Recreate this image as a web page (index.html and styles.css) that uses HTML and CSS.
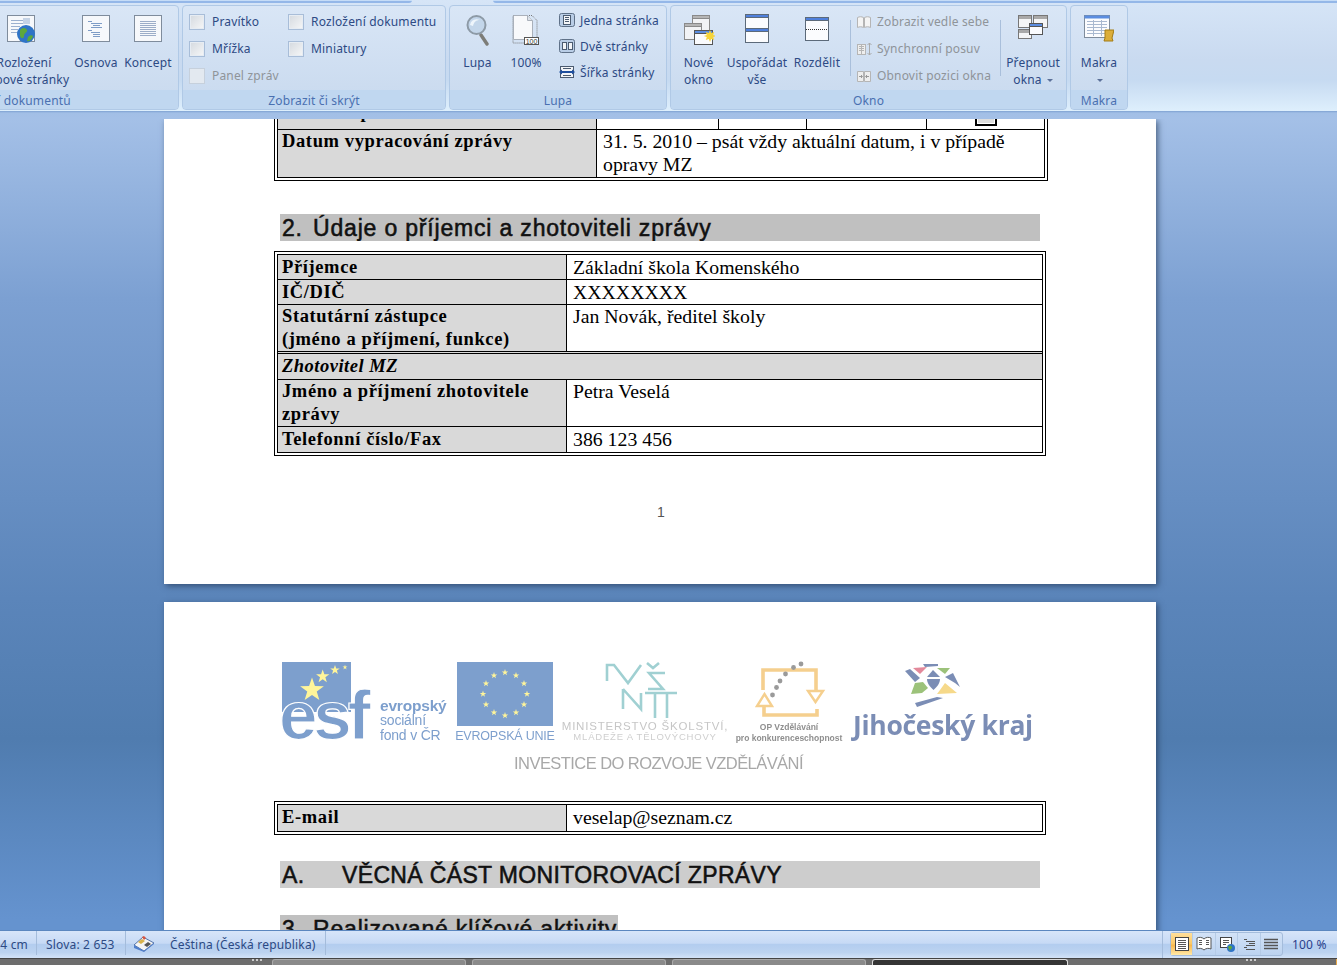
FILE: index.html
```html
<!DOCTYPE html>
<html lang="cs">
<head>
<meta charset="utf-8">
<title>Microsoft Word</title>
<link rel="stylesheet" href="styles.css">
</head>
<body>
<div class="app">
  <header class="ribbon">
    <div class="tabline"><span class="tl-a"></span><span class="tl-gap"></span><span class="tl-b"></span></div>
    <div class="groups">
      <section class="group g1">
        <div class="gbody">
          <div class="big w-web">
            <svg class="ic" width="32" height="32" viewBox="0 0 32 32"><rect x="2.500" y="1.500" width="27" height="26" fill="#f6f8fb" stroke="#7f8c9c"/><path d="M6 6.500h12M6 9.500h12M6 12.500h9M6 15.500h7M6 18.500h7" stroke="#9bb0cf"/><rect x="18" y="4" width="7" height="6" fill="#c5d3e6"/><circle cx="21" cy="20" r="9" fill="#2f74c6"/><path d="M15 16c3-3 6-2 7 0s-3 3-3 6-3 3-4 0zM23 23c2-2 4-2 5-1-1 4-4 6-6 5z" fill="#5da83c"/></svg>
            <span class="lab">Rozložení<br>webové stránky</span>
          </div>
          <div class="big w-osn">
            <svg class="ic" width="30" height="32" viewBox="0 0 30 32"><rect x="1.500" y="1.500" width="27" height="26" fill="#f6f8fb" stroke="#7f8c9c"/><path d="M7 7.500h4M10 9.500h11M12 11.500h7M10 13.500h11M7 16.500h4M10 18.500h9M12 20.500h7M12 22.500h7" stroke="#7e9cc6"/></svg>
            <span class="lab">Osnova</span>
          </div>
          <div class="big w-kon">
            <svg class="ic" width="30" height="32" viewBox="0 0 30 32"><rect x="1.500" y="1.500" width="27" height="26" fill="#f6f8fb" stroke="#7f8c9c"/><path d="M7 7.500h16M7 9.500h16M7 11.500h16M7 13.500h16M7 15.500h16M7 17.500h16M7 19.500h16M7 21.500h16" stroke="#9cadc8"/></svg>
            <span class="lab">Koncept</span>
          </div>
        </div>
        <div class="gcap gcap-r">Zobrazení dokumentů</div>
      </section>

      <section class="group g2">
        <div class="gbody checks">
          <div class="chk-col col-a">
            <div class="chk"><i class="box"></i>Pravítko</div>
            <div class="chk"><i class="box"></i>Mřížka</div>
            <div class="chk off"><i class="box"></i>Panel zpráv</div>
          </div>
          <div class="chk-col">
            <div class="chk"><i class="box"></i>Rozložení dokumentu</div>
            <div class="chk"><i class="box"></i>Miniatury</div>
          </div>
        </div>
        <div class="gcap">Zobrazit či skrýt</div>
      </section>

      <section class="group g3">
        <div class="gbody">
          <div class="big w-lupa">
            <svg class="ic" width="24" height="32" viewBox="0 0 24 32"><path d="M15 21l6 9" stroke="#7d7d78" stroke-width="3.400" stroke-linecap="round"/><circle cx="10.500" cy="11" r="9" fill="#c3d6ea" stroke="#8d9aa6" stroke-width="2"/><path d="M4 11c1-5 5-7 10-5-4 0-6 2-7 6z" fill="#eef5fb"/></svg>
            <span class="lab">Lupa</span>
          </div>
          <div class="big w-100">
            <svg class="ic" width="28" height="32" viewBox="0 0 28 32"><path d="M1 1.500h19l5 5V29H1z" fill="none" stroke="#777" stroke-dasharray="1 1"/><path d="M1.500 1.500h14l5 5v19h-19z" fill="#f8f9fb" stroke="#a9b0ba"/><path d="M15.500 1.500v5h5" fill="#dde3ea" stroke="#a9b0ba"/><rect x="12.500" y="23.500" width="14" height="7" fill="#fff" stroke="#555"/><text x="19.500" y="29.500" class="mini">100</text></svg>
            <span class="lab">100%</span>
          </div>
          <div class="smalls s-lupa">
            <div class="sm"><svg width="16" height="16" viewBox="0 0 16 16"><rect x=".5" y="1.500" width="15" height="13" rx="2" fill="#b9cde6" stroke="#5f7188"/><rect x="4.500" y="3.500" width="7" height="9" fill="#f3f5f8" stroke="#4b5b70"/><path d="M6 5.500h4M6 7.500h4M6 9.500h4" stroke="#4b5b70"/></svg>Jedna stránka</div>
            <div class="sm"><svg width="16" height="16" viewBox="0 0 16 16"><rect x=".5" y="1.500" width="15" height="13" rx="2" fill="#b9cde6" stroke="#5f7188"/><rect x="3.500" y="4.500" width="4" height="7" fill="#f3f5f8" stroke="#4b5b70"/><rect x="9.500" y="4.500" width="4" height="7" fill="#f3f5f8" stroke="#4b5b70"/></svg>Dvě stránky</div>
            <div class="sm"><svg width="16" height="16" viewBox="0 0 16 16"><rect x="1.500" y="2.500" width="13" height="11" fill="#f3f5f8" stroke="#4b5b70"/><path d="M4 4.500h8M4 11.500h8" stroke="#4b5b70"/><path d="M0 8l3-2.500v5zM16 8l-3-2.500v5z" fill="#1f4f9e"/><path d="M3 8h10" stroke="#1f4f9e" stroke-width="2"/></svg>Šířka stránky</div>
          </div>
        </div>
        <div class="gcap">Lupa</div>
      </section>

      <section class="group g4">
        <div class="gbody">
          <div class="big w-nove">
            <svg class="ic" width="32" height="32" viewBox="0 0 32 32"><rect x="9.500" y="1.500" width="17" height="16" fill="#f2f3f5" stroke="#8a8a8a"/><rect x="9.500" y="1.500" width="17" height="3" fill="#b5b5b5" stroke="#8a8a8a"/><rect x="1.500" y="9.500" width="17" height="16" fill="#f2f3f5" stroke="#8a8a8a"/><rect x="1.500" y="9.500" width="17" height="3" fill="#b5b5b5" stroke="#8a8a8a"/><rect x="11.500" y="16.500" width="18" height="14" fill="#fafbfd" stroke="#555"/><rect x="11.500" y="16.500" width="18" height="3" fill="#5b8de0" stroke="#555"/><path d="M27 16l1.200 3 3-1-1 3 3 1-3 1 1 3-3-1-1.200 3-1.200-3-3 1 1-3-3-1 3-1-1-3 3 1z" fill="#f6d43a"/></svg>
            <span class="lab">Nové<br>okno</span>
          </div>
          <div class="big w-usp">
            <svg class="ic" width="24" height="32" viewBox="0 0 24 32"><rect x=".5" y=".5" width="23" height="28" fill="#fbfcfe" stroke="#5c6a7a"/><rect x=".5" y=".5" width="23" height="3" fill="#4f80dc" stroke="#5c6a7a"/><rect x=".5" y="14.500" width="23" height="3" fill="#4f80dc" stroke="#5c6a7a"/></svg>
            <span class="lab">Uspořádat<br>vše</span>
          </div>
          <div class="big w-roz">
            <svg class="ic" width="24" height="32" viewBox="0 0 24 32"><rect x=".5" y="3.500" width="23" height="23" fill="#fbfcfe" stroke="#5c6a7a"/><rect x=".5" y="3.500" width="23" height="3" fill="#4f80dc" stroke="#5c6a7a"/><path d="M1 15.500h22" stroke="#333" stroke-dasharray="1 1"/></svg>
            <span class="lab">Rozdělit</span>
          </div>
          <i class="vsep sep1"></i>
          <div class="smalls s-okno">
            <div class="sm off"><svg width="16" height="16" viewBox="0 0 16 16"><path d="M1.500 3.500c2-1 4-1 6 0v10c-2-1-4-1-6 0zM8.500 3.500c2-1 4-1 6 0v10c-2-1-4-1-6 0z" fill="#f4f4f4" stroke="#b5b5b5"/></svg>Zobrazit vedle sebe</div>
            <div class="sm off"><svg width="16" height="16" viewBox="0 0 16 16"><rect x="1.500" y="3.500" width="8" height="10" fill="#eee" stroke="#b5b5b5"/><path d="M3 5.500h5M3 7.500h5M3 9.500h5M5.500 4v9" stroke="#b5b5b5"/><path d="M13.500 2v12M11.500 4l2-2 2 2M11.500 12l2 2 2-2" stroke="#aaa" fill="none"/></svg>Synchronní posuv</div>
            <div class="sm off"><svg width="16" height="16" viewBox="0 0 16 16"><path d="M1.500 3.500h6v10h-6zM8.500 3.500h6v10h-6z" fill="#eee" stroke="#b5b5b5"/><path d="M3 8.500h3M5 7l1.500 1.500L5 10M13 8.500h-3M11 7L9.500 8.500 11 10" stroke="#999" fill="none"/></svg>Obnovit pozici okna</div>
          </div>
          <i class="vsep sep2"></i>
          <div class="big w-pre">
            <svg class="ic" width="30" height="32" viewBox="0 0 30 32"><g fill="#f4f5f6" stroke="#777"><rect x=".5" y="1.500" width="13" height="12"/><rect x="15.500" y="1.500" width="14" height="12"/><rect x=".5" y="15.500" width="13" height="9"/></g><g fill="#a9a9a9"><rect x="1" y="2" width="12" height="3"/><rect x="16" y="2" width="13" height="3"/><rect x="1" y="16" width="12" height="3"/></g><rect x="11.500" y="9.500" width="13" height="11" fill="#fbfcfe" stroke="#555"/><rect x="11.500" y="9.500" width="13" height="3" fill="#5b8de0" stroke="#555"/></svg>
            <span class="lab">Přepnout<br>okna <em class="caret"></em></span>
          </div>
        </div>
        <div class="gcap gcap-okno">Okno</div>
      </section>

      <section class="group g5">
        <div class="gbody">
          <div class="big w-mak">
            <svg class="ic" width="30" height="32" viewBox="0 0 30 32"><rect x=".5" y="1.500" width="25" height="22" fill="#fbfcfe" stroke="#7f8c9c"/><rect x=".5" y="1.500" width="25" height="3" fill="#5b8de0"/><path d="M3 7.500h20M3 10.500h20M3 13.500h20M3 16.500h20M3 19.500h20M9.500 6v16M17.500 6v16" stroke="#a9b9d0"/><path d="M21 16h9l-2 8 1 3h-9l1-3z" fill="#dcae3a" stroke="#a37c16"/></svg>
            <span class="lab">Makra<br><em class="caret"></em></span>
          </div>
        </div>
        <div class="gcap">Makra</div>
      </section>
    </div>
    <div class="ribbon-foot"></div>
  </header>

  <main class="docarea">
    <article class="page page1">
      <table class="tbl tbl-top">
        <colgroup><col class="c-a"><col class="c-b"><col class="c-c"><col class="c-d"><col class="c-e"></colgroup>
        <tr class="r-clip"><th>Žádost o platbu</th><td>Ano</td><td class="ctr">X</td><td>Ne</td><td class="ctr"><i class="cb"></i></td></tr>
        <tr><th class="r-date">Datum vypracování zprávy</th><td colspan="4" class="r-date">31. 5. 2010 – psát vždy aktuální datum, i v případě opravy MZ</td></tr>
      </table>

      <h2 class="bar bar-2"><span class="num">2.</span>Údaje o příjemci a zhotoviteli zprávy</h2>

      <table class="tbl tbl-main">
        <colgroup><col class="m-a"><col class="m-b"></colgroup>
        <tr class="r24"><th>Příjemce</th><td>Základní škola Komenského</td></tr>
        <tr class="r24"><th>IČ/DIČ</th><td>XXXXXXXX</td></tr>
        <tr><th>Statutární zástupce<br>(jméno a příjmení, funkce)</th><td>Jan Novák, ředitel školy</td></tr>
        <tr class="dbl r25"><th colspan="2" class="it">Zhotovitel MZ</th></tr>
        <tr><th>Jméno a příjmení zhotovitele<br>zprávy</th><td>Petra Veselá</td></tr>
        <tr class="r25"><th>Telefonní číslo/Fax</th><td>386 123 456</td></tr>
      </table>
      <div class="pageno">1</div>
    </article>

    <article class="page page2">
      <svg class="logos" width="760" height="122" viewBox="280 655 760 122" role="img" aria-label="Loga">
        <defs>
          <path id="star" d="M0-1 .235-.324.951-.309.38.124.588.809 0 .4-.588.809-.38.124-.951-.309-.235-.324z" fill="#fff59a"/>
        </defs>
        <!-- ESF -->
        <rect x="282" y="662" width="69" height="50" fill="#7d9fcd"/>
        <use href="#star" transform="translate(312 690) scale(12.500)"/>
        <use href="#star" transform="translate(322.700 676.500) scale(7)"/>
        <use href="#star" transform="translate(335 670) scale(5)"/>
        <use href="#star" transform="translate(345 667.300) scale(2.600)"/>
        <text x="279" y="739" class="esf">esf</text>
        <text x="380" y="711" class="esf-t b">evropský</text>
        <text x="380" y="725" class="esf-t">sociální</text>
        <text x="380" y="740" class="esf-t">fond v ČR</text>
        <!-- EU -->
        <rect x="457" y="662" width="96" height="64" fill="#7d9fcd"/>
        <use href="#star" transform="translate(505 672.500) scale(3.400)"/>
        <use href="#star" transform="translate(516 675.500) scale(3.400)"/>
        <use href="#star" transform="translate(524 683.500) scale(3.400)"/>
        <use href="#star" transform="translate(527 694) scale(3.400)"/>
        <use href="#star" transform="translate(524 704.500) scale(3.400)"/>
        <use href="#star" transform="translate(516 712.500) scale(3.400)"/>
        <use href="#star" transform="translate(505 715.500) scale(3.400)"/>
        <use href="#star" transform="translate(494 712.500) scale(3.400)"/>
        <use href="#star" transform="translate(486 704.500) scale(3.400)"/>
        <use href="#star" transform="translate(483 694) scale(3.400)"/>
        <use href="#star" transform="translate(486 683.500) scale(3.400)"/>
        <use href="#star" transform="translate(494 675.500) scale(3.400)"/>
        <text x="505" y="740" class="eu-t">EVROPSKÁ UNIE</text>
        <!-- MSMT -->
        <path d="M607 681V665H614L628 683L641 665M623 689V709M623 689L641 709V693M647 663l6 5 6-5M665 673H649L663 689H648M645 693H677M655 693V718M667 693V718" fill="none" stroke="#a0d0d2" stroke-width="2.600"/>
        <text x="645" y="730" class="ms1">MINISTERSTVO ŠKOLSTVÍ,</text>
        <text x="645" y="740" class="ms2">MLÁDEŽE A TĚLOVÝCHOVY</text>
        <text x="658.500" y="769" class="inv">INVESTICE DO ROZVOJE VZDĚLÁVÁNÍ</text>
        <!-- OP -->
        <path d="M763 690v-20h53v22M764 702v13h53v-6" fill="none" stroke="#f5cf8e" stroke-width="3.600"/>
        <path d="M808 691h15l-7.500 11zM757 706h15l-7.500-12z" fill="#fff" stroke="#f5cf8e" stroke-width="2.400"/>
        <g fill="#9a9a9a"><circle cx="801" cy="664" r="2.400"/><circle cx="793.500" cy="667.500" r="2.400"/><circle cx="785.500" cy="674" r="2.400"/><circle cx="780" cy="681" r="2.400"/><circle cx="776.500" cy="687.500" r="2.400"/><circle cx="772.500" cy="695" r="2.400"/></g>
        <text x="789" y="730" class="op">OP Vzdělávání</text>
        <text x="789" y="741" class="op">pro konkurenceschopnost</text>
        <!-- Jihočeský kraj -->
        <path d="M913 668l14-1-7 7z" fill="#e3899b"/>
        <path d="M905 671l5-2 10 9-5 4z" fill="#7b8db5"/>
        <path d="M937 668l13 0-5 6z" fill="#9cc27a"/>
        <path d="M923 664h15v2l-13 1z" fill="#7b8db5"/>
        <path d="M933 670l7 7h-13z" fill="#7b8db5"/>
        <path d="M953 673l7 14-5-4-10-6z" fill="#7b8db5"/>
        <path d="M927 679h13c0 4-3 8-6.500 11-3.500-3-6.500-7-6.500-11z" fill="#7b8db5"/>
        <path d="M915 683l8-1 5 6-6 5-11 1z" fill="#9cc27a"/>
        <path d="M945 683l12 10-20 1 3-4z" fill="#f6d98a"/>
        <path d="M915 703l22-6 6 1-26 9z" fill="#7b8db5"/>
        <text x="853" y="735" class="jk">Jihočeský kraj</text>
      </svg>

      <table class="tbl tbl-mail">
        <colgroup><col class="m-a"><col class="m-b"></colgroup>
        <tr class="r26"><th>E-mail</th><td>veselap@seznam.cz</td></tr>
      </table>

      <h2 class="bar bar-a"><span class="num-a">A.</span>VĚCNÁ ČÁST MONITOROVACÍ ZPRÁVY</h2>
      <h2 class="bar bar-3"><span class="num">3.</span>Realizované klíčové aktivity</h2>
    </article>
  </main>

  <footer class="status">
    <div class="st st-pos">4 cm</div>
    <div class="st st-words">Slova: 2 653</div>
    <div class="st st-lang">
      <svg class="st-ic" width="22" height="18" viewBox="0 0 22 18"><path d="M1 10l9-8 11 6-10 8z" fill="#f4f4f4" stroke="#5474a8"/><path d="M1 10v3l10 4 10-8V8l-10 8z" fill="#4f7ecb"/><path d="M5 7l4-3 3 2-4 3z" fill="#d9b24a"/><path d="M11 10l4-3 3 2-4 3z" fill="#555"/><path d="M9 2l2-1 2 2-2 2z" fill="#d8553f"/></svg>
      <span>Čeština (Česká republika)</span>
    </div>
    <div class="st-fill"></div>
    <div class="views">
      <span class="vb on"><svg width="16" height="16" viewBox="0 0 16 16"><rect x="1.500" y="1.500" width="13" height="13" fill="#fff" stroke="#444"/><path d="M4 4.500h8M4 6.500h8M4 8.500h8M4 10.500h8M4 12.500h8" stroke="#555"/></svg></span>
      <span class="vb"><svg width="16" height="16" viewBox="0 0 16 16"><path d="M8 3C6 1 3 1 1 2v11c2-1 5-1 7 1 2-2 5-2 7-1V2c-2-1-5-1-7 1z" fill="#fff" stroke="#555"/><path d="M3 4.500h3M3 6.500h3M3 8.500h3M10 4.500h3M10 6.500h3M10 8.500h3" stroke="#555"/></svg></span>
      <span class="vb"><svg width="16" height="16" viewBox="0 0 16 16"><rect x="1.500" y="1.500" width="11" height="10" fill="#fff" stroke="#444"/><path d="M4 4.500h6M4 6.500h6M4 8.500h3" stroke="#555"/><circle cx="12" cy="12" r="4" fill="#2f74c6"/><path d="M9 11c2-2 3-1 4 0s-2 2-2 4z" fill="#5da83c"/></svg></span>
      <span class="vb"><svg width="16" height="16" viewBox="0 0 16 16"><path d="M3 3.500h3M5 5.500h9M8 7.500h6M5 9.500h9M3 11.500h3M5 13.500h9" stroke="#555"/></svg></span>
      <span class="vb"><svg width="16" height="16" viewBox="0 0 16 16"><path d="M1 3.500h14M1 6.500h14M1 9.500h14M1 12.500h14" stroke="#555" stroke-width="1.500"/></svg></span>
    </div>
    <div class="zoomv">100 %</div>
  </footer>

  <div class="taskbar">
    <span class="dots"></span>
    <span class="tb"></span><span class="tb"></span><span class="tb"></span><span class="tb tb-on"></span>
    <span class="tb-fill"></span>
    <span class="dots"></span>
    <span class="tb-tray"></span>
  </div>
</div>
</body>
</html>
```

FILE: styles.css
```css
* { box-sizing: border-box; }
html, body { margin: 0; padding: 0; height: 100%; }
body { font-family: "Noto Sans", "Open Sans", sans-serif; letter-spacing: .17px; overflow: hidden; background: #6593cf; }
.app { width: 1337px; height: 965px; display: flex; flex-direction: column; overflow: hidden; }

/* Ribbon */
.ribbon { flex: 0 0 119px; display: flex; flex-direction: column; background: linear-gradient(#d6e5f7 0, #c9daf0 60px, #c6daf1 80px, #dff0fd 112px); overflow: hidden; position: relative; z-index: 2; }
.tabline { flex: 0 0 3px; display: flex; }
.tl-a { width: 412px; background: linear-gradient(#c5dcf7, #c5dcf7 1px, #94b7e8 1px, #94b7e8); border-radius: 0 0 3px 0; }
.tl-gap { width: 81px; }
.tl-b { flex: 1; background: linear-gradient(#c5dcf7, #c5dcf7 1px, #94b7e8 1px, #94b7e8); border-radius: 0 0 0 3px; }
.groups { flex: 0 0 108px; display: flex; gap: 3px; padding-top: 2px; margin-left: -41px; }
.ribbon-foot { flex: 1; background: linear-gradient(#7ea2d2 0, #a2bfe6 2px, #a4c0e7 100%); }
.group { height: 105px; display: flex; flex-direction: column; border: 1px solid #b0c9e6; border-radius: 4px; background: linear-gradient(#d9e6f6, #c8d9ee); flex: none; overflow: hidden; }
.gbody { height: 84px; display: flex; position: relative; color: #2d4a84; }
.gcap { flex: 1; background: #c0d7f0; color: #4a70b0; font-size: 12px; line-height: 20px; padding-top: 1px; text-align: center; white-space: nowrap; overflow: hidden; }
.gcap-r { text-align: left; text-indent: -17px; }
.gcap-okno { text-align: left; padding-left: 182px; }
.g1 { width: 220px; }
.g2 { width: 264px; }
.g3 { width: 218px; }
.g4 { width: 397px; }
.g5 { width: 58px; }

.big { display: flex; flex-direction: column; align-items: center; padding-top: 8px; flex: none; }
.ic { height: 32px; flex: none; }
.lab { margin-top: 8px; font-size: 12px; line-height: 17px; text-align: center; white-space: nowrap; color: #2d4a84; }
.w-web { width: 100px; margin-left: 14px; }
.w-web .ic { margin-right: 6px; }
.w-osn { width: 50px; margin-left: -3px; }
.w-kon { width: 54px; }
.w-lupa { width: 54px; padding-left: 1px; }
.w-100 { width: 44px; }
.w-nove { width: 55px; }
.w-usp { width: 62px; }
.w-roz { width: 58px; }
.w-pre { width: 64px; }
.w-mak { width: 56px; }
.mini { font: 7px "Liberation Sans", sans-serif; letter-spacing: 0; text-anchor: middle; fill: #333; }

.checks { padding: 2px 0 0 6px; }
.chk-col { display: flex; flex-direction: column; }
.col-a { width: 99px; }
.chk { height: 27px; display: flex; align-items: center; font-size: 12px; color: #2d4a84; white-space: nowrap; }
.box { width: 16px; height: 16px; margin-right: 7px; border: 1px solid #a8bdd8; background: linear-gradient(135deg, #d4d9df, #f6f7f8); flex: none; box-shadow: inset 0 0 0 1px #e6ecf3; }
.chk.off { color: #8f9499; }
.off .box { border-color: #c6d0dc; background: #e3e9f0; box-shadow: none; }

.smalls { display: flex; flex-direction: column; padding-top: 1px; }
.s-lupa { margin-left: 11px; }
.s-okno { padding-top: 2px; }
.sm { height: 26px; display: flex; align-items: center; gap: 5px; font-size: 12px; white-space: nowrap; color: #2d4a84; }
.s-okno .sm { height: 27px; color: #8f9499; }
.vsep { width: 1px; height: 56px; background: #a9bfdb; flex: none; }
.sep1 { margin: 14px 5px 0 4px; }
.sep2 { margin: 14px 0 0 9px; }
.caret { display: inline-block; width: 0; height: 0; border: 3px solid transparent; border-top: 3px solid #5c7199; border-bottom: 0; vertical-align: middle; margin-left: 2px; }

/* Document */
.docarea { flex: 1; min-height: 0; padding-left: 164px; overflow: hidden; display: flex; flex-direction: column; gap: 18px; background: linear-gradient(#a4c0e7 0, #7ca0d2 180px, #5b85ba 480px, #507caf 620px, #6593cf 800px); }
.page { width: 992px; background: #fff; box-shadow: 2px 2px 6px rgba(30, 50, 80, .65); flex: none; position: relative; letter-spacing: 0; }
.page1 { height: 465px; padding-left: 110px; overflow: hidden; }
.page2 { height: 400px; padding: 55px 0 0 110px; }

.tbl { table-layout: fixed; border-collapse: separate; border-spacing: 0; border: 4px double #000; font-family: "Liberation Serif", serif; font-size: 19.800px; color: #000; }
.tbl th, .tbl td { border-top: 1px solid #000; border-left: 1px solid #000; text-align: left; vertical-align: top; line-height: 23px; overflow: hidden; }
.tbl th { background: #d9d9d9; font-size: 18.500px; font-weight: 700; letter-spacing: .62px; border-left: 0; padding: 0 0 0 4px; white-space: nowrap; }
.tbl td { padding: 0 0 0 6px; white-space: normal; }
.tbl .it { font-style: italic; letter-spacing: .5px; }
.tbl tr:first-child th, .tbl tr:first-child td { border-top: 0; }
.tbl-top { width: 774px; margin-top: -19px; }
.c-a { width: 318px; } .c-b { width: 122px; } .c-c { width: 88px; } .c-d { width: 120px; } .c-e { width: 118px; }
.r-clip th, .r-clip td { height: 25px; line-height: 16px; }
.tbl .ctr { text-align: center; padding: 0; }
.cb { display: inline-block; vertical-align: top; width: 22px; height: 18px; margin-top: 4px; border: 2px solid #000; background: #ddd; box-shadow: inset 0 0 0 1px #fff; }
.tbl .r-date { height: 48px; }
.bar { margin: 0; padding: 0; background: #c0c0c0; font: 400 23px/29px "Liberation Sans", sans-serif; height: 27px; letter-spacing: .82px; color: #111; display: flex; white-space: nowrap; overflow: hidden; -webkit-text-stroke: .55px #111; }
.num { width: 33px; padding-left: 2px; flex: none; }
.bar-2 { width: 760px; margin: 33px 0 0 6px; }
.tbl-main { width: 772px; margin-top: 10px; }
.m-a { width: 288px; } .m-b { width: 476px; }
.r24 th, .r24 td { height: 24px; line-height: 24px; }
.r25 th, .r25 td { height: 25px; line-height: 25px; }
.r26 th, .r26 td { height: 26px; line-height: 25px; }
.tbl .dbl th { border-top: 3px double #000; }
.pageno { margin: 48px 0 0 383px; font: 14px "Liberation Sans", sans-serif; color: #555; }

.logos { display: block; margin: -2px 0 0 6px; filter: blur(.45px); }
.esf { font: 700 69px "Liberation Sans", sans-serif; fill: #7d9fcd; stroke: #fff; stroke-width: 1.200px; letter-spacing: -4px; }
.esf-t { font: 14px "Liberation Sans", sans-serif; fill: #7d9fcd; letter-spacing: -.2px; }
.esf-t.b { font-weight: 700; font-size: 15.500px; }
.eu-t { font: 12.500px "Liberation Sans", sans-serif; fill: #7d9fcd; text-anchor: middle; letter-spacing: -.2px; }
.ms1 { font: 11.500px "Liberation Sans", sans-serif; fill: #c6c6c6; text-anchor: middle; letter-spacing: .8px; }
.ms2 { font: 9.500px "Liberation Sans", sans-serif; fill: #cfcfcf; text-anchor: middle; letter-spacing: .8px; }
.inv { font: 16.500px "Liberation Sans", sans-serif; fill: #a8a8a8; text-anchor: middle; letter-spacing: -.56px; }
.op { font: 700 8.500px "Liberation Sans", sans-serif; fill: #8f8f8f; text-anchor: middle; }
.jk { font: 700 26.500px "Open Sans", sans-serif; fill: #7b8db5; letter-spacing: -.3px; }

.tbl-mail { width: 772px; margin-top: 24px; }
.bar-a { width: 760px; margin: 26px 0 0 6px; background: #cdcdcd; letter-spacing: .35px; }
.num-a { width: 62px; padding-left: 2px; flex: none; }
.bar-3 { width: 338px; margin: 27px 0 0 6px; }

/* Status bar */
.status { flex: 0 0 27px; border-top: 1px solid #5b87bf; display: flex; align-items: stretch; background: linear-gradient(#d7e5f9 0, #c7daf5 45%, #b3cdef 50%, #bcd3f0 80%, #d3e3f8 100%); font-size: 12px; color: #2d4a84; white-space: nowrap; position: relative; z-index: 2; }
.st { display: flex; align-items: center; border-right: 1px solid #a4bcdb; height: 24px; padding-top: 2px; }
.st-pos { width: 37px; padding-right: 8px; justify-content: flex-end; }
.st-words { width: 89px; padding-left: 9px; }
.st-lang { width: 200px; padding-left: 7px; }
.st-ic { margin-right: 15px; flex: none; }
.st-fill { width: 837px; border-right: 1px solid #a4bcdb; }
.views { margin: 1px 0 0 7px; width: 113px; height: 24px; display: flex; border: 1px solid #a4bcdb; border-radius: 3px; background: linear-gradient(#d2e2f7, #bcd3f0); flex: none; }
.vb { flex: 1; display: flex; align-items: center; justify-content: center; border-right: 1px solid #b5cbe6; }
.vb:last-child { border-right: 0; }
.vb.on { background: linear-gradient(#ffdf9b 0, #fbc866 50%, #f9b74b 55%, #ffe9a8 100%); }
.zoomv { padding: 0 0 0 9px; line-height: 27px; color: #2b3f8c; }

/* Taskbar */
.taskbar { flex: 0 0 7px; display: flex; gap: 6px; background: #6d6d6d; padding-left: 252px; overflow: hidden; border-top: 1px solid #444; }
.dots { width: 11px; height: 2px; background: repeating-linear-gradient(90deg, #ccc 0 2px, transparent 2px 4px); flex: none; margin-right: 3px; }
.tb { width: 194px; border: 1px solid #aaa; border-bottom: 0; border-radius: 3px 3px 0 0; background: #8a8a8a; flex: none; }
.tb-on { width: 196px; background: #353535; border-color: #ddd; }
.tb-fill { width: 166px; flex: none; }
.tb-tray { width: 12px; margin-left: 70px; background: #e8a94a; flex: none; }
```
